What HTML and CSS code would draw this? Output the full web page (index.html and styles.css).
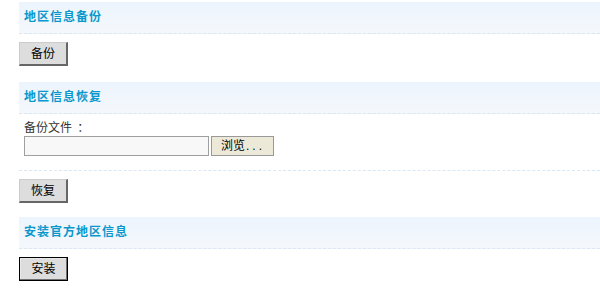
FILE: index.html
```html
<!DOCTYPE html>
<html lang="zh-CN">
<head>
<meta charset="utf-8">
<title>地区信息</title>
<link rel="stylesheet" href="styles.css">
</head>
<body>
<div class="page">
  <div class="section">
    <div class="section-head">地区信息备份</div>
    <div class="actions first">
      <button class="btn" type="button">备份</button>
    </div>
  </div>

  <div class="section">
    <div class="section-head">地区信息恢复</div>
    <div class="form">
      <div class="label">备份文件 <span class="colon">：</span></div>
      <div class="file-row">
        <span class="file-input"></span>
        <span class="browse">浏览<span class="dots">...</span></span>
      </div>
    </div>
    <div class="actions sep">
      <button class="btn" type="button">恢复</button>
    </div>
  </div>

  <div class="section">
    <div class="section-head">安装官方地区信息</div>
    <div class="actions last">
      <button class="btn btn-default" type="button">安装</button>
    </div>
  </div>
</div>
</body>
</html>
```

FILE: styles.css
```css
html, body {
  margin: 0;
  padding: 0;
  background: #ffffff;
}

body {
  font-family: "Liberation Sans", "Noto Sans CJK SC", sans-serif;
  font-size: 12px;
  color: #000;
}

.page {
  padding: 2px 0 0 19px;
}

.section-head {
  height: 31px;
  line-height: 31px;
  padding-left: 5px;
  background: linear-gradient(to bottom, #ecf4fd, #f4f8fc);
  border-bottom: 1px dashed #dce7f1;
  font-weight: bold;
  letter-spacing: 1px;
  color: #0a98cc;
}

.actions {
  padding: 8px 0 16px;
  display: flex;
}

.actions.sep {
  border-top: 1px dashed #d9e8f5;
  padding: 8px 0 14px;
}

.btn {
  box-sizing: border-box;
  width: 49px;
  height: 24px;
  padding: 0;
  margin: 0;
  font-family: "Liberation Sans", "Noto Sans CJK SC", sans-serif;
  font-size: 12px;
  color: #000;
  background: #dddddd;
  border-style: solid;
  border-width: 1px 2px 2px 1px;
  border-color: #cccccc #666666 #666666 #cccccc;
  line-height: 20px;
}

.btn-default {
  border: 1px solid #000;
  box-shadow: inset -1px -1px 0 #707070, inset 1px 1px 0 #e8e8e8;
}

.form {
  padding: 6px 0 14px 5px;
}

.label {
  height: 16px;
  line-height: 16px;
  color: #333333;
}

.colon {
  margin-left: 2px;
}

.file-row {
  display: flex;
  gap: 2px;
  height: 20px;
}

.file-input {
  box-sizing: border-box;
  width: 185px;
  height: 20px;
  border: 1px solid #a0a0a0;
  background: #f8f8f8;
}

.browse {
  box-sizing: border-box;
  width: 63px;
  height: 20px;
  border: 1px solid #999999;
  background: #ece9d8;
  padding-left: 9px;
  line-height: 18px;
  color: #000;
}

.dots {
  letter-spacing: 3px;
  margin-left: 1px;
}
```
